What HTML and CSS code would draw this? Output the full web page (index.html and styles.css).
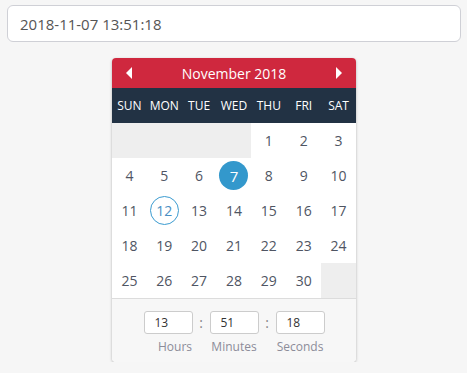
FILE: index.html
```html
<!DOCTYPE html>
<html>
<head>
    <title>Date Time Picker</title>
    <link rel="stylesheet" href="styles.css">
</head>
<body>
    <input type="text" class="date-input" value="2018-11-07 13:51:18">

    <div class="calendar">
        <div class="cal-header">
            <span class="arrow arrow-left"></span>
            <span class="cal-title">November 2018</span>
            <span class="arrow arrow-right"></span>
        </div>
        <div class="cal-weekdays">
            <span>SUN</span><span>MON</span><span>TUE</span><span>WED</span><span>THU</span><span>FRI</span><span>SAT</span>
        </div>
        <div class="cal-days" id="days"></div>
        <div class="cal-time">
            <div class="time-row">
                <input type="text" class="time-field" value="13">
                <span class="colon">:</span>
                <input type="text" class="time-field" value="51">
                <span class="colon">:</span>
                <input type="text" class="time-field" value="18">
            </div>
            <div class="time-labels">
                <span class="hours-label">Hours</span>
                <span>Minutes</span>
                <span>Seconds</span>
            </div>
        </div>
    </div>

    <script>
        const days = document.getElementById("days");
        const startOffset = 4;
        const total = 30;
        let html = '';
        for (let i = 0; i < startOffset; i++) html += '<span class="day empty"></span>';
        for (let d = 1; d <= total; d++) {
            let cls = 'day';
            if (d === 7) cls += ' selected';
            if (d === 12) cls += ' today';
            html += `<span class="${cls}"><b>${d}</b></span>`;
        }
        html += '<span class="day empty"></span>';
        days.innerHTML = html;
    </script>
</body>
</html>
```

FILE: styles.css
```css
* { margin: 0; padding: 0; box-sizing: border-box; }
body { font-family: "Open Sans", Arial, sans-serif; background-color: #f6f6f6; padding: 5px 6px 0 7px; color: #555; }
.date-input {
    display: block; width: 100%; height: 37px; padding: 0 12px;
    border: 1px solid #cfd0d6; border-radius: 6px; background: white;
    font-family: inherit; font-size: 15px; color: #555;
}
.calendar {
    width: 244px; margin: 16px auto 0; background: white;
    border-radius: 4px; box-shadow: 0 1px 3px rgba(0, 0, 0, 0.28); overflow: hidden;
}
.cal-header {
    display: flex; align-items: center; justify-content: space-between;
    height: 30px; padding: 0 14px; background-color: #cf283e; color: white;
}
.cal-title { font-size: 14px; }
.arrow { width: 0; height: 0; border-top: 6px solid transparent; border-bottom: 6px solid transparent; }
.arrow-left { border-right: 6px solid white; }
.arrow-right { border-left: 6px solid white; }
.cal-weekdays {
    display: grid; grid-template-columns: repeat(7, 1fr); height: 35px; align-items: center;
    background-color: #223244; color: white; font-size: 12px; font-weight: 500; text-align: center;
}
.cal-days { display: grid; grid-template-columns: repeat(7, 1fr); grid-auto-rows: 35px; }
.day { display: flex; align-items: center; justify-content: center; font-size: 14px; color: #4f5563; }
.day b {
    display: flex; align-items: center; justify-content: center;
    width: 29px; height: 29px; border-radius: 50%; font-weight: normal;
}
.day.empty { background-color: #eeeeee; }
.day.selected b { background-color: #3398cc; color: white; font-size: 15px; }
.day.today b { border: 1px solid #3a9bd0; color: #4a8fc4; }
.cal-time { background-color: #f7f7f7; border-top: 1px solid #dcdcdc; padding: 12px 0 7px; }
.time-row { display: flex; justify-content: center; align-items: center; }
.time-field {
    width: 49px; height: 23px; padding-left: 10px; border: 1px solid #cccccc; border-radius: 3px;
    background: white; font-family: inherit; font-size: 12px; color: #333;
}
.colon { width: 17px; text-align: center; font-size: 14px; color: #888; }
.time-labels { display: flex; justify-content: center; gap: 17px; margin-top: 4px; font-size: 12px; color: #8c8c99; }
.time-labels span { width: 49px; text-align: center; }
.time-labels .hours-label { padding-left: 14px; }
```
